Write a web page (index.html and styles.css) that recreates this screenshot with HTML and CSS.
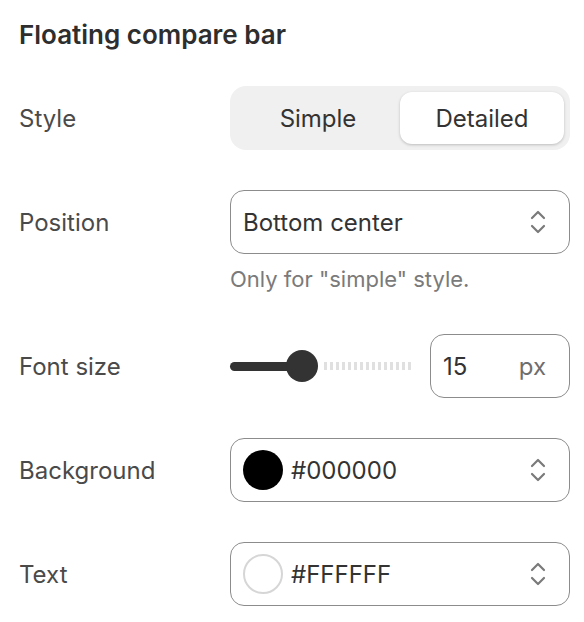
FILE: index.html
```html
<!DOCTYPE html>
<html>
<head>
<meta charset="utf-8">
<link rel="stylesheet" href="styles.css">
</head>
<body>
<div class="panel">
  <h2 class="title">Floating compare bar</h2>
  <div class="rows">
    <div class="row">
      <div class="label">Style</div>
      <div class="segmented">
        <div class="seg">Simple</div>
        <div class="seg active">Detailed</div>
      </div>
    </div>
    <div class="row">
      <div class="label">Position</div>
      <div class="select">
        <span class="value">Bottom center</span>
        <svg class="chev" width="18" height="28" viewBox="0 0 18 28"><path d="M3 10 L9 4 L15 10 M3 18 L9 24 L15 18" fill="none" stroke="#7a7a7a" stroke-width="2.2" stroke-linecap="round" stroke-linejoin="round"/></svg>
      </div>
      <div class="help">Only for "simple" style.</div>
    </div>
    <div class="row">
      <div class="label">Font size</div>
      <div class="slider-group">
        <div class="slider">
          <div class="fill"></div>
          <div class="thumb"></div>
          <div class="rest"></div>
        </div>
        <div class="numinput">
          <span class="num">15</span>
          <span class="unit">px</span>
        </div>
      </div>
    </div>
    <div class="row">
      <div class="label">Background</div>
      <div class="select">
        <span class="swatch black"></span>
        <span class="value">#000000</span>
        <svg class="chev" width="18" height="28" viewBox="0 0 18 28"><path d="M3 10 L9 4 L15 10 M3 18 L9 24 L15 18" fill="none" stroke="#7a7a7a" stroke-width="2.2" stroke-linecap="round" stroke-linejoin="round"/></svg>
      </div>
    </div>
    <div class="row">
      <div class="label">Text</div>
      <div class="select">
        <span class="swatch white"></span>
        <span class="value">#FFFFFF</span>
        <svg class="chev" width="18" height="28" viewBox="0 0 18 28"><path d="M3 10 L9 4 L15 10 M3 18 L9 24 L15 18" fill="none" stroke="#7a7a7a" stroke-width="2.2" stroke-linecap="round" stroke-linejoin="round"/></svg>
      </div>
    </div>
  </div>
</div>
</body>
</html>
```

FILE: styles.css
```css
html, body {
  margin: 0;
  padding: 0;
  background: #ffffff;
}
body {
  font-family: Inter, "Noto Sans", "Liberation Sans", sans-serif;
  color: #333333;
}
.panel {
  padding: 18px 14px 0 19px;
}
.title {
  margin: 0;
  font-size: 26px;
  font-weight: 600;
  color: #2e2e2e;
  line-height: 34px;
}
.rows {
  margin-top: 34px;
  display: flex;
  flex-direction: column;
  gap: 40px;
}
.row {
  display: grid;
  grid-template-columns: 211px 340px;
  align-items: center;
  row-gap: 10px;
}
.label {
  font-size: 24px;
  color: #4a4a4a;
}
.help {
  grid-column: 2;
  font-size: 22px;
  line-height: 30px;
  color: #7a7a7a;
}
.segmented {
  display: grid;
  grid-template-columns: 1fr 1fr;
  height: 64px;
  box-sizing: border-box;
  padding: 6px;
  border-radius: 16px;
  background: #f0f0f0;
}
.seg {
  display: flex;
  align-items: center;
  justify-content: center;
  font-size: 24px;
  color: #333333;
  border-radius: 12px;
}
.seg.active {
  background: #ffffff;
  box-shadow: 0 1px 3px rgba(0,0,0,0.22);
}
.select {
  display: flex;
  align-items: center;
  height: 64px;
  box-sizing: border-box;
  border: 1px solid #8c8c8c;
  border-radius: 14px;
  padding: 0 22px 0 12px;
  gap: 8px;
}
.select .value {
  flex: 1;
  font-size: 24px;
  color: #333333;
}
.swatch {
  width: 40px;
  height: 40px;
  border-radius: 50%;
  box-sizing: border-box;
  flex: none;
}
.swatch.black {
  background: #000000;
}
.swatch.white {
  background: #ffffff;
  border: 2px solid #d6d6d6;
}
.slider-group {
  display: flex;
  align-items: center;
  gap: 16px;
}
.slider {
  width: 184px;
  height: 32px;
  display: flex;
  align-items: center;
}
.fill {
  width: 58px;
  height: 9px;
  background: #333333;
  border-radius: 5px 0 0 5px;
}
.thumb {
  width: 32px;
  height: 32px;
  border-radius: 50%;
  background: #333333;
  margin-left: -2px;
  flex: none;
}
.rest {
  flex: 1;
  height: 8px;
  margin-left: 6px;
  border-radius: 0 4px 4px 0;
  background: repeating-linear-gradient(to right, #e0e0e0 0 3px, transparent 3px 6px);
}
.numinput {
  width: 140px;
  height: 64px;
  box-sizing: border-box;
  border: 1px solid #8c8c8c;
  border-radius: 14px;
  display: flex;
  align-items: center;
  justify-content: space-between;
  padding: 0 23px 0 12px;
  font-size: 24px;
}
.num {
  color: #333333;
}
.unit {
  color: #6e6e6e;
}
```
